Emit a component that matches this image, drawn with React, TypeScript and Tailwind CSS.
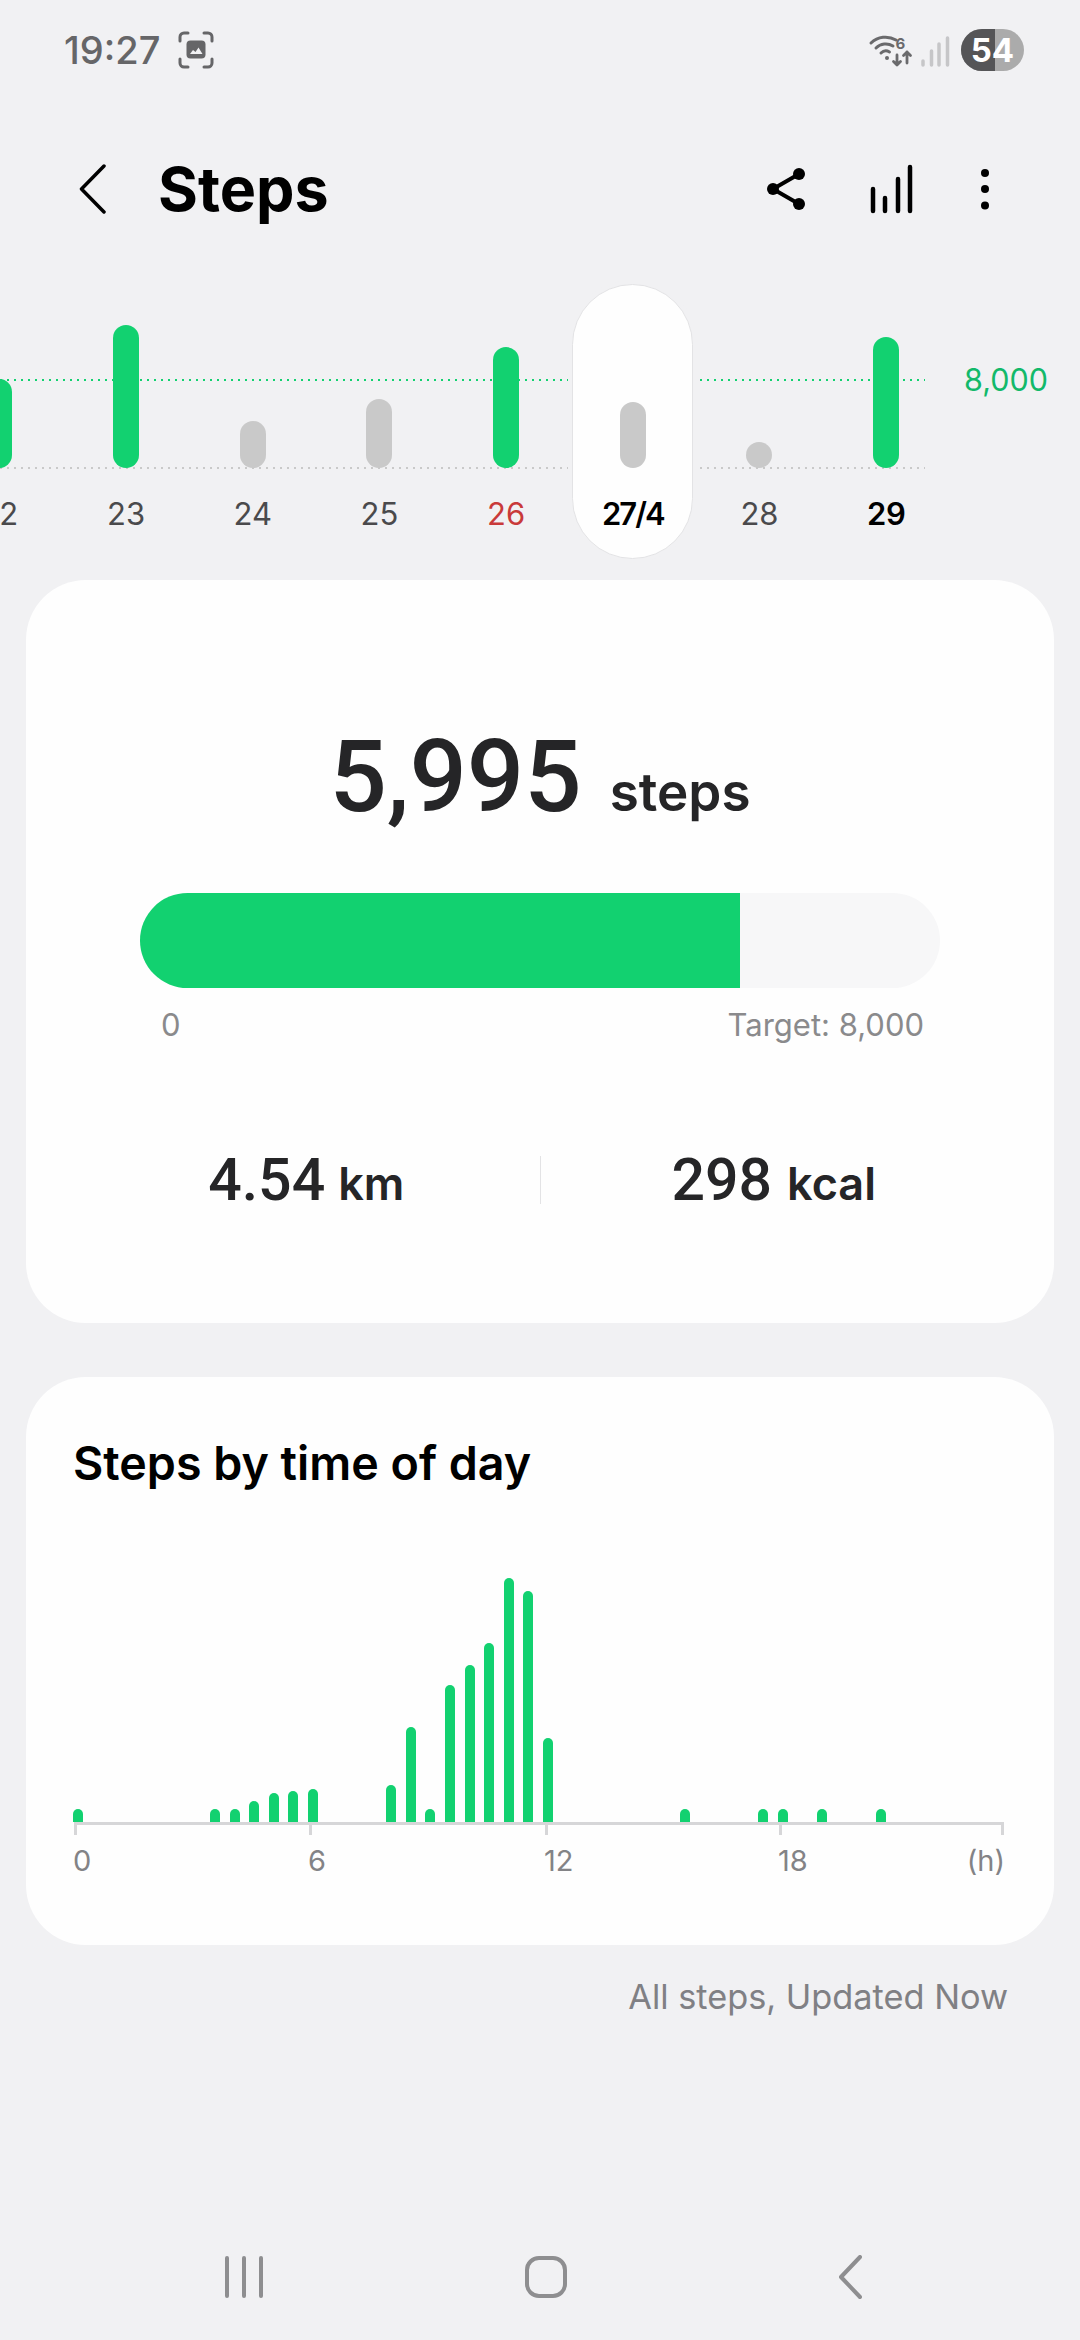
const days = [
  { label: "22", height: 89, green: true, color: "text-[#4a4a4c]" },
  { label: "23", height: 143, green: true, color: "text-[#4a4a4c]" },
  { label: "24", height: 47, green: false, color: "text-[#4a4a4c]" },
  { label: "25", height: 69, green: false, color: "text-[#4a4a4c]" },
  { label: "26", height: 121, green: true, color: "text-[#c93a3a]" },
  { label: "27/4", height: 66, green: false, color: "text-black font-semibold tracking-[-2px]", selected: true },
  { label: "28", height: 26, green: false, color: "text-[#4a4a4c]" },
  { label: "29", height: 131, green: true, color: "text-black font-semibold tracking-[-0.500px]" },
];

const hourly: Record<number, number> = {
  0: 13, 7: 13, 8: 13, 9: 21, 10: 29, 11: 31, 12: 33, 16: 37, 17: 95, 18: 13, 19: 137, 20: 157,
  21: 179, 22: 244, 23: 231, 24: 84, 31: 13, 35: 13, 36: 13, 38: 13, 41: 13,
};

const slots = Array.from({ length: 48 }, (_, i) => hourly[i] ?? 0);

const axis = [
  { label: "0", width: 235 },
  { label: "6", width: 236 },
  { label: "12", width: 234 },
];

function StatusBar() {
  return (
    <div className="h-[100px] flex items-center justify-between pl-[64px] pr-[56px]">
      <div className="flex items-center gap-[18px]">
        <span className="text-[38px] leading-none font-medium text-[#666668]">19:27</span>
        <svg width="36" height="38" viewBox="0 0 36 38" fill="none">
          <path d="M2 10V6a4 4 0 0 1 4-4h4M26 2h4a4 4 0 0 1 4 4v4M34 28v4a4 4 0 0 1-4 4h-4M10 36H6a4 4 0 0 1-4-4v-4" stroke="#666668" strokeWidth="3" strokeLinecap="round" />
          <rect x="8.500" y="9.500" width="19" height="18" rx="4" fill="#666668" />
          <path d="M12 23l3-4 2.500 2 3-4.500 4 6.500z" fill="#f1f1f3" />
        </svg>
      </div>
      <div className="flex items-center gap-[8px]">
        <svg width="85" height="36" viewBox="0 0 85 36" fill="none">
          <path d="M3 11A21 21 0 0 1 28 8M8 16A14 14 0 0 1 25 14M13 21A7 7 0 0 1 21.500 20" stroke="#6a6a6c" strokeWidth="3" strokeLinecap="round" />
          <circle cx="19" cy="26" r="2" fill="#6a6a6c" />
          <path d="M29 23v10M25.500 29.500L29 33l3.500-3.500M39 31V20M35.500 23.500L39 20l3.500 3.500" stroke="#6a6a6c" strokeWidth="2.800" strokeLinecap="round" strokeLinejoin="round" />
          <text x="27.500" y="17" fontFamily="Inter, sans-serif" fontWeight="700" fontSize="15" fill="#6a6a6c">6</text>
          <path d="M55 33v-4M63.500 33V19M71 33V12M79.500 33V6" stroke="#c6c6c8" strokeWidth="3.500" strokeLinecap="round" />
        </svg>
        <div className="relative w-[63px] h-[42px] rounded-full overflow-hidden bg-[#ababab] flex items-center justify-center">
          <div className="absolute inset-y-0 left-0 w-[34px] bg-[#555557]" />
          <span className="relative text-[33px] leading-none font-bold text-white">54</span>
        </div>
      </div>
    </div>
  );
}

function Header() {
  return (
    <div className="h-[178px] flex items-center pl-[79px] pr-[90px]">
      <svg width="28" height="50" viewBox="0 0 28 50" fill="none">
        <path d="M25 2L2.500 25 25 48" stroke="#000" strokeWidth="3.500" strokeLinecap="round" strokeLinejoin="round" />
      </svg>
      <h1 className="ml-[51px] text-[61px] leading-none font-bold text-black flex-1">Steps</h1>
      <div className="flex items-center">
        <svg width="44" height="44" viewBox="0 0 44 44" fill="none" className="mr-[59px]">
          <path d="M9 22L35 7M9 22l26 15" stroke="#000" strokeWidth="4" />
          <circle cx="9" cy="22" r="6" fill="#000" />
          <circle cx="35" cy="7" r="6" fill="#000" />
          <circle cx="35" cy="37" r="6" fill="#000" />
        </svg>
        <svg width="48" height="50" viewBox="0 0 48 50" fill="none" className="mr-[65px]">
          <path d="M6 47V25M18 47V34M31 47V15M43 47V3" stroke="#000" strokeWidth="4.500" strokeLinecap="round" />
        </svg>
        <svg width="10" height="42" viewBox="0 0 10 42" fill="#000">
          <circle cx="5" cy="5" r="4" />
          <circle cx="5" cy="21" r="4" />
          <circle cx="5" cy="37.500" r="4" />
        </svg>
      </div>
    </div>
  );
}

function DayStrip() {
  return (
    <div className="relative h-[302px] overflow-hidden">
      <div className="absolute left-0 top-[101px] h-[2px] w-[925px] bg-[repeating-linear-gradient(to_right,#12d170_0,#12d170_2px,transparent_2px,transparent_7px)]" />
      <div className="absolute left-0 top-[189px] h-[2px] w-[925px] bg-[repeating-linear-gradient(to_right,#c9c9c9_0,#c9c9c9_2px,transparent_2px,transparent_7px)]" />
      <span className="absolute right-[32px] top-[82px] text-[30.500px] leading-[40px] text-[#12b96a]">8,000</span>
      <div className="flex -ml-[64px]">
        {days.map((d) => (
          <div key={d.label} className="relative w-[126.700px] shrink-0 flex flex-col items-center">
            {d.selected && (
              <div className="absolute left-[3px] top-[6px] w-[121px] h-[275px] rounded-full bg-[#fefefe] border border-[#e3e3e5] shadow-[0_0_0_4px_#f1f1f3]" />
            )}
            <div className="relative h-[190px] flex items-end">
              <div
                className={`w-[26px] rounded-full ${d.green ? "bg-[#12d170]" : "bg-[#c9c9c9]"}`}
                style={{ height: d.height }}
              />
            </div>
            <span className={`relative mt-[24px] text-[31px] leading-[44px] ${d.color}`}>{d.label}</span>
          </div>
        ))}
      </div>
    </div>
  );
}

function SummaryCard() {
  const digits = "font-['Roboto',sans-serif]";
  return (
    <section className="mx-[26px] h-[743px] rounded-[60px] bg-[#fefefe] flex flex-col pt-[147px]">
      <div className="flex items-baseline justify-center h-[100px]">
        <span className={`text-[101px] leading-[100px] font-medium text-[#252527] ${digits}`}>5,995</span>
        <span className="ml-[28px] text-[53px] leading-none font-semibold text-[#252527]">steps</span>
      </div>
      <div className="mx-[114px] mt-[66px] h-[95px] rounded-full bg-[#f7f7f8] overflow-hidden">
        <div className="h-full w-[600px] bg-[#12d170]" />
      </div>
      <div className="ml-[135px] mr-[130px] mt-[17px] flex justify-between text-[31px] leading-[40px] text-[#8a8a8c]">
        <span>0</span>
        <span>Target: 8,000</span>
      </div>
      <div className="mx-[47px] mt-[105px] flex items-center">
        <div className="flex-1 flex items-baseline justify-center">
          <span className={`text-[59px] leading-none font-medium text-[#252527] ${digits}`}>4.54</span>
          <span className="ml-[13px] text-[45px] leading-none font-semibold text-[#252527]">km</span>
        </div>
        <div className="w-px h-[48px] bg-[#e3e3e5]" />
        <div className="flex-1 flex items-baseline justify-center">
          <span className={`text-[59px] leading-none font-medium text-[#252527] ${digits}`}>298</span>
          <span className="ml-[15px] text-[45px] leading-none font-semibold text-[#252527]">kcal</span>
        </div>
      </div>
    </section>
  );
}

function TimeCard() {
  return (
    <section className="mx-[26px] mt-[54px] h-[568px] rounded-[60px] bg-[#fefefe] pl-[47px] pt-[60px]">
      <h2 className="text-[46.600px] leading-[52px] font-semibold text-black">Steps by time of day</h2>
      <div className="mt-[77px] flex items-end h-[256px]">
        {slots.map((h, i) => (
          <div key={i} className="w-[19.580px] shrink-0">
            {h > 0 && <div className="w-[10px] rounded-t-full bg-[#12d170]" style={{ height: h }} />}
          </div>
        ))}
      </div>
      <div className="ml-[1px] flex text-[29px] leading-[36px] text-[#838386]">
        {axis.map((a) => (
          <div key={a.label} className="shrink-0" style={{ width: a.width }}>
            <div className="h-[13px] border-l-[3px] border-t-[3px] border-[#d6d6d8]" />
            <span className="block mt-[8px] -ml-[1px]">{a.label}</span>
          </div>
        ))}
        <div className="w-[225px] shrink-0">
          <div className="h-[13px] border-x-[3px] border-t-[3px] border-[#d6d6d8]" />
          <div className="mt-[8px] flex justify-between -ml-[1px] -mr-[1px]">
            <span>18</span>
            <span>(h)</span>
          </div>
        </div>
      </div>
    </section>
  );
}

export default function App() {
  return (
    <div className="w-[1080px] h-[2340px] bg-[#f1f1f3] flex flex-col overflow-hidden font-['Inter','Noto_Sans',sans-serif]">
      <StatusBar />
      <Header />
      <DayStrip />
      <SummaryCard />
      <TimeCard />
      <p className="mt-[30px] pr-[72px] text-right text-[34.300px] leading-[44px] text-[#808084]">All steps, Updated Now</p>
      <nav className="mt-auto mb-[42px] flex items-center h-[42px] pl-[225px]">
        <svg width="38" height="42" viewBox="0 0 38 42" fill="none">
          <path d="M2 2v38M19 2v38M36 2v38" stroke="#8e8e90" strokeWidth="4" strokeLinecap="round" />
        </svg>
        <svg width="42" height="42" viewBox="0 0 42 42" fill="none" className="ml-[262px]">
          <rect x="2" y="2" width="38" height="38" rx="12" stroke="#8e8e90" strokeWidth="4" />
        </svg>
        <svg width="24" height="44" viewBox="0 0 24 44" fill="none" className="ml-[271px]">
          <path d="M22 2L3 22l19 20" stroke="#8e8e90" strokeWidth="4" strokeLinecap="round" strokeLinejoin="round" />
        </svg>
      </nav>
    </div>
  );
}
